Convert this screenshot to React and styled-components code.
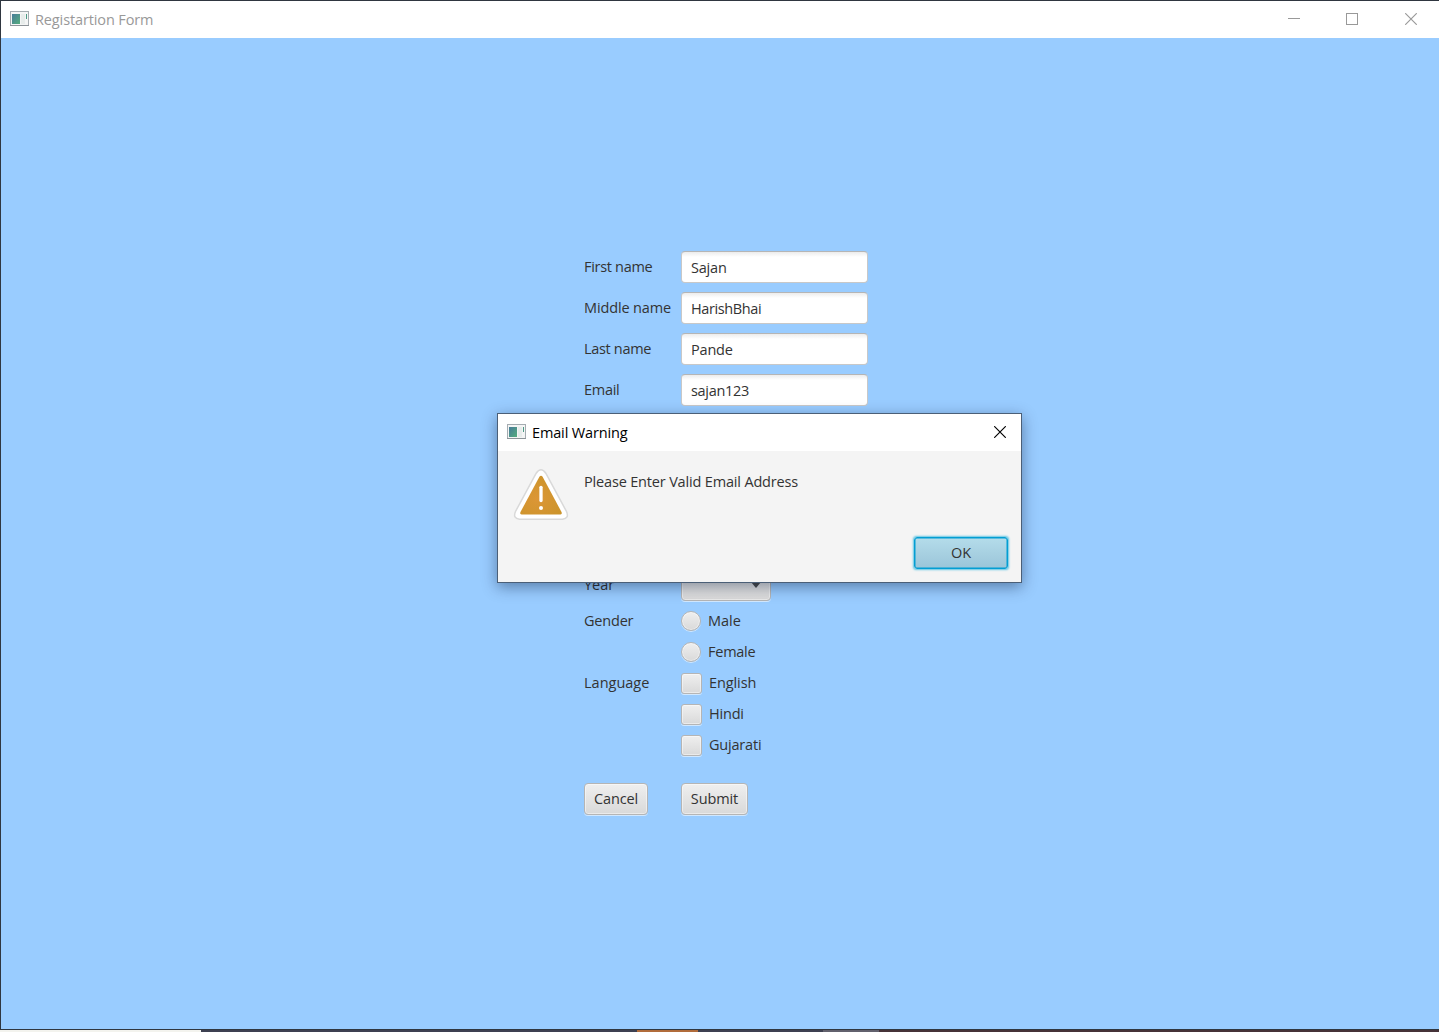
import React from "react";
import styled, { createGlobalStyle } from "styled-components";

const GlobalStyle = createGlobalStyle`
  * { box-sizing: border-box; }
  body { margin: 0; overflow: hidden; background: #2c3340; }
`;

const Desktop = styled.div`
  position: relative;
  display: flex;
  flex-direction: column;
  width: 1439px;
  height: 1032px;
  padding: 1px 0 0 1px;
  background: #2f3640;
  font-family: "Open Sans", "Noto Sans", sans-serif;
  font-size: 14.5px;
  color: #333;
`;

const TitleBar = styled.header`
  display: flex;
  align-items: center;
  flex: none;
  height: 37px;
  padding-left: 9px;
  background: #fff;
  color: ${(p) => (p.$active ? "#000" : "#999")};
`;

const Title = styled.span`
  flex: 1;
  margin-left: 6px;
  line-height: 20px;
`;

const Label = styled.span`
  display: inline-block;
  line-height: 20px;
  white-space: nowrap;
  letter-spacing: ${(p) => p.$track || 0}px;
`;

const Controls = styled.div`
  display: flex;
  align-items: center;
  gap: 46px;
  padding: 0 ${(p) => p.$right}px 1px 0;

  svg:last-child:not(:first-child) {
    margin-left: 1px;
  }
`;

const IconBox = styled.svg`
  margin-bottom: 1px;
`;

const Body = styled.main`
  flex: none;
  height: 991px;
  padding: 213px 0 0 583px;
  background: #99ccff;
`;

const Form = styled.form`
  display: flex;
  flex-direction: column;
  gap: 10px;
  width: 284px;
`;

const Row = styled.div`
  display: grid;
  grid-template-columns: 97px 1fr;
  align-items: center;
  height: ${(p) => p.$height || 31}px;
  margin-top: ${(p) => p.$before || 0}px;
`;

const Field = styled.div`
  display: flex;
  align-items: center;
  height: 32px;
  padding: 2px 0 0 9px;
  border: 1px solid #c8c8c8;
  border-top-color: #b5b5b5;
  border-radius: 4px;
  background: linear-gradient(#ececec, #fff 5px);
`;

const raised = `
  border: 1px solid #b5b5b5;
  background: linear-gradient(#efefef, #d9d9d9);
  box-shadow: inset 0 0 0 1px rgba(255, 255, 255, 0.45), 0 1px 0 rgba(255, 255, 255, 0.55);
`;

const Combo = styled.div`
  ${raised}
  display: flex;
  align-items: center;
  justify-content: flex-end;
  width: 90px;
  height: 32px;
  padding: 0 9px 1px 0;
  border-radius: 4px;
`;

const Choice = styled.label`
  display: flex;
  align-items: center;
  height: 21px;
  gap: 7px;
`;

const Radio = styled.span`
  ${raised}
  width: 20px;
  height: 20px;
  margin-top: 1px;
  border-radius: 50%;
`;

const Check = styled.span`
  ${raised}
  width: 21px;
  height: 21px;
  margin-top: 1px;
  border-radius: 3px;
`;

const Button = styled.div`
  ${raised}
  display: flex;
  align-items: center;
  justify-content: center;
  width: ${(p) => p.$width}px;
  height: 32px;
  border-radius: 4px;
`;

const Dialog = styled.section`
  position: absolute;
  left: 497px;
  top: 413px;
  width: 525px;
  height: 170px;
  border: 1px solid #4b5f77;
  background: #f4f4f4;
  box-shadow: 0 4px 14px rgba(0, 20, 50, 0.42);
`;

const Message = styled.div`
  display: flex;
  align-items: flex-start;
  gap: 14px;
  height: 86px;
  padding: 17px 0 0 14px;
`;

const MessageText = styled.div`
  padding-top: 4px;
`;

const Actions = styled.div`
  display: flex;
  justify-content: flex-end;
  padding-right: 13px;
`;

const DefaultButton = styled(Button)`
  border: 1px solid #039ed3;
  border-radius: 3px;
  background: linear-gradient(#b4dcea, #9bc5d9);
  box-shadow: inset 0 0 0 0.5px #039ed3, 0 0 2px 0.5px #5fc4e3;
`;

const Taskbar = styled.footer`
  display: flex;
  height: 2px;
  margin: 1px 0 0 -1px;
  background: #3d4051;
`;

const Strip = styled.span`
  width: ${(p) => p.$width}px;
  background: ${(p) => p.$color};
`;

function AppIcon() {
  return (
    <IconBox width="19" height="16" viewBox="0 0 19 16">
      <defs>
        <linearGradient id="pane" x1="0" y1="0" x2="1" y2="1">
          <stop offset="0" stopColor="#477b99" />
          <stop offset="1" stopColor="#55ad7d" />
        </linearGradient>
      </defs>
      <rect x="0.5" y="0.5" width="18" height="14" fill="#f4f5f5" stroke="#a5acb1" />
      <path d="M0 14.5h19" stroke="#8d9499" />
      <rect x="2" y="3" width="8" height="10" fill="url(#pane)" />
      <path d="M11 3h4v10h-4z" fill="#e7eceb" />
      <path d="M16.5 3v5" stroke="#4c9a85" />
    </IconBox>
  );
}

function CloseIcon() {
  return (
    <svg width="12" height="12" viewBox="0 0 12 12">
      <path d="M.2.2l11.6 11.6M11.8.2L.2 11.8" stroke="currentColor" strokeWidth="1.15" />
    </svg>
  );
}

function MinimizeIcon() {
  return (
    <svg width="12" height="12" viewBox="0 0 12 12">
      <path d="M0 5.5h12" stroke="currentColor" />
    </svg>
  );
}

function MaximizeIcon() {
  return (
    <svg width="12" height="12" viewBox="0 0 12 12">
      <rect x=".5" y=".5" width="11" height="11" fill="none" stroke="currentColor" />
    </svg>
  );
}

function WarningIcon() {
  return (
    <svg width="58" height="54" viewBox="0 0 58 54">
      <defs>
        <radialGradient id="amber" cx=".4" cy=".6" r=".65">
          <stop offset="0" stopColor="#dc9636" />
          <stop offset="1" stopColor="#cc942b" />
        </radialGradient>
      </defs>
      <path
        d="M24.2 5.2Q29 -1.6 33.8 5.2L54.5 43.5Q57.5 50.5 50.5 51.2H7.5Q.5 50.5 3.5 43.5Z"
        fill="#fff"
        stroke="#d9d9d9"
        strokeWidth="1.5"
      />
      <path
        d="M27.4 8.8Q29 6.6 30.6 8.8L49.5 44Q50.5 46.2 48.5 46.4H9.5Q7.5 46.2 8.5 44Z"
        fill="url(#amber)"
      />
      <path d="M29 19.3v13.2" stroke="#fff" strokeWidth="3.3" strokeLinecap="round" />
      <circle cx="29" cy="40" r="2" fill="#fff" />
    </svg>
  );
}

const names = [
  ["First name", -0.3, "Sajan", -0.2],
  ["Middle name", -0.14, "HarishBhai", -0.38],
  ["Last name", -0.32, "Pande", -0.2],
  ["Email", -0.3, "sajan123", -0.3],
];

export default function App() {
  return (
    <Desktop>
      <GlobalStyle />
      <TitleBar>
        <AppIcon />
        <Title><Label $track={-0.12}>Registartion Form</Label></Title>
        <Controls $right={22}>
          <MinimizeIcon />
          <MaximizeIcon />
          <CloseIcon />
        </Controls>
      </TitleBar>
      <Body>
        <Form>
          {names.map(([label, labelTrack, value, valueTrack]) => (
            <Row key={label}>
              <Label $track={labelTrack}>{label}</Label>
              <Field><Label $track={valueTrack}>{value}</Label></Field>
            </Row>
          ))}
          <Row $before={154}>
            <Label>Year</Label>
            <Combo>
              <svg width="10" height="6" viewBox="0 0 10 6"><path d="M0 0h10L5 6z" fill="#4a4a4a" /></svg>
            </Combo>
          </Row>
          <Row $height={21}>
            <Label $track={-0.2}>Gender</Label>
            <Choice><Radio /><Label>Male</Label></Choice>
          </Row>
          <Row $height={21}>
            <span />
            <Choice><Radio /><Label $track={-0.25}>Female</Label></Choice>
          </Row>
          <Row $height={21}>
            <Label>Language</Label>
            <Choice><Check /><Label $track={-0.1}>English</Label></Choice>
          </Row>
          {["Hindi", "Gujarati"].map((language) => (
            <Row key={language} $height={21}>
              <span />
              <Choice><Check /><Label $track={-0.2}>{language}</Label></Choice>
            </Row>
          ))}
          <Row $before={18}>
            <Button $width={64}><Label $track={-0.15}>Cancel</Label></Button>
            <Button $width={67}><Label $track={-0.1}>Submit</Label></Button>
          </Row>
        </Form>
      </Body>
      <Taskbar>
        <Strip $width={201} $color="#f3f3ee" />
        <Strip $width={436} $color="#3d4051" />
        <Strip $width={61} $color="#b16c3b" />
        <Strip $width={125} $color="#3d4051" />
        <Strip $width={56} $color="#62616d" />
        <Strip $width={560} $color="#463238" />
      </Taskbar>
      <Dialog>
        <TitleBar $active>
          <AppIcon />
          <Title><Label $track={-0.14}>Email Warning</Label></Title>
          <Controls $right={15}><CloseIcon /></Controls>
        </TitleBar>
        <Message>
          <WarningIcon />
          <MessageText><Label $track={-0.17}>Please Enter Valid Email Address</Label></MessageText>
        </Message>
        <Actions>
          <DefaultButton $width={94}><Label>OK</Label></DefaultButton>
        </Actions>
      </Dialog>
    </Desktop>
  );
}
